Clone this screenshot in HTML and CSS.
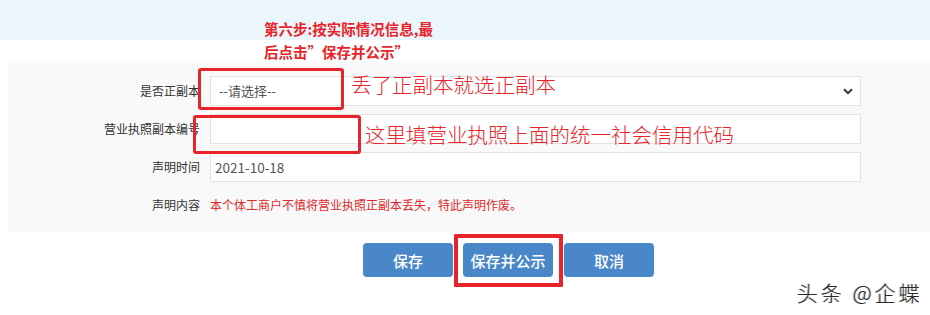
FILE: index.html
```html
<!DOCTYPE html>
<html lang="zh-CN">
<head>
<meta charset="utf-8">
<title>声明</title>
<link rel="stylesheet" href="styles.css">
</head>
<body>
<div class="page">
  <div class="topbar"></div>
  <div class="panel">
    <div class="row">
      <div class="label">是否正副本</div>
      <div class="field select">
        <span>--请选择--</span>
        <svg class="chev" width="10" height="7" viewBox="0 0 10 7"><path d="M1 1.2 L5 5.2 L9 1.2" fill="none" stroke="#333" stroke-width="2"/></svg>
      </div>
    </div>
    <div class="row">
      <div class="label">营业执照副本编号</div>
      <div class="field"></div>
    </div>
    <div class="row">
      <div class="label">声明时间</div>
      <div class="field date">2021-10-18</div>
    </div>
    <div class="row">
      <div class="label">声明内容</div>
      <div class="statement">本个体工商户不慎将营业执照正副本丢失，特此声明作废。</div>
    </div>
  </div>
  <div class="buttons">
    <button class="btn">保存</button>
    <button class="btn">保存并公示</button>
    <button class="btn">取消</button>
  </div>

  <div class="note step">第六步:按实际情况信息,最<br>后点击”保存并公示”</div>
  <div class="note big n1">丢了正副本就选正副本</div>
  <div class="note big n2">这里填营业执照上面的统一社会信用代码</div>
  <div class="mark m1"></div>
  <div class="mark m2"></div>
  <div class="mark m3"></div>
  <div class="watermark">头条 @企蝶</div>
</div>
</body>
</html>
```
FILE: styles.css
```css
html, body {
  margin: 0;
  padding: 0;
  background: #ffffff;
}
body {
  font-family: "Noto Sans CJK SC", "Liberation Sans", sans-serif;
  color: #333;
}
.page {
  position: relative;
  width: 930px;
  height: 315px;
  overflow: hidden;
}
.topbar {
  height: 40px;
  background: #ebf5fc;
}
.panel {
  margin: 21px 0 0 8px;
  background: #f9f9f9;
  padding: 15px 0 12px 0;
  display: flex;
  flex-direction: column;
  gap: 8px;
}
.row {
  display: flex;
  align-items: center;
  height: 30px;
}
.label {
  width: 202px;
  text-align: right;
  font-size: 12px;
  line-height: 16px;
  color: #333;
  padding-right: 10px;
  box-sizing: border-box;
}
.field {
  box-sizing: border-box;
  width: 651px;
  height: 30px;
  background: #fff;
  border: 1px solid #e2e2e2;
  font-size: 13px;
  line-height: 28px;
  color: #555;
}
.select {
  display: flex;
  justify-content: space-between;
  align-items: center;
  padding: 0 8px 0 8px;
}
.chev {
  margin-right: -1px;
}
.date {
  padding-left: 4px;
  font-size: 13.5px;
}
.statement {
  font-size: 12px;
  line-height: 16px;
  color: #e0292c;
}
.buttons {
  display: flex;
  gap: 10px;
  margin: 11px 0 0 363px;
}
.btn {
  width: 90px;
  height: 34px;
  border: none;
  border-radius: 4px;
  background: #4a87c9;
  color: #fff;
  font-family: "Noto Sans CJK SC", sans-serif;
  font-size: 15px;
  font-weight: 500;
  padding: 0;
}
.btn:last-child {
  margin-left: 1px;
}
.note {
  position: absolute;
  color: #e8242a;
}
.step {
  left: 264px;
  top: 17px;
  font-size: 14.5px;
  font-weight: 700;
  line-height: 23px;
}
.big {
  font-size: 20.5px;
  line-height: 26px;
  font-weight: 300;
}
.n1 {
  left: 351px;
  top: 71px;
}
.n2 {
  left: 365px;
  top: 121px;
}
.mark {
  position: absolute;
  border: 3px solid #e8242a;
  border-radius: 3px;
  box-sizing: border-box;
}
.m1 {
  left: 198px;
  top: 68px;
  width: 146px;
  height: 42px;
}
.m2 {
  left: 193px;
  top: 115px;
  width: 168px;
  height: 39px;
}
.m3 {
  left: 454px;
  top: 234px;
  width: 109px;
  height: 53px;
  border-width: 4px;
  border-radius: 1px;
}
.watermark {
  position: absolute;
  left: 797px;
  top: 278px;
  font-size: 21px;
  line-height: 28px;
  font-weight: 300;
  color: #2a2a2a;
  letter-spacing: 3px;
  text-shadow: 1px 1px 0 #fff, -1px 0 0 #aaa;
}
```
